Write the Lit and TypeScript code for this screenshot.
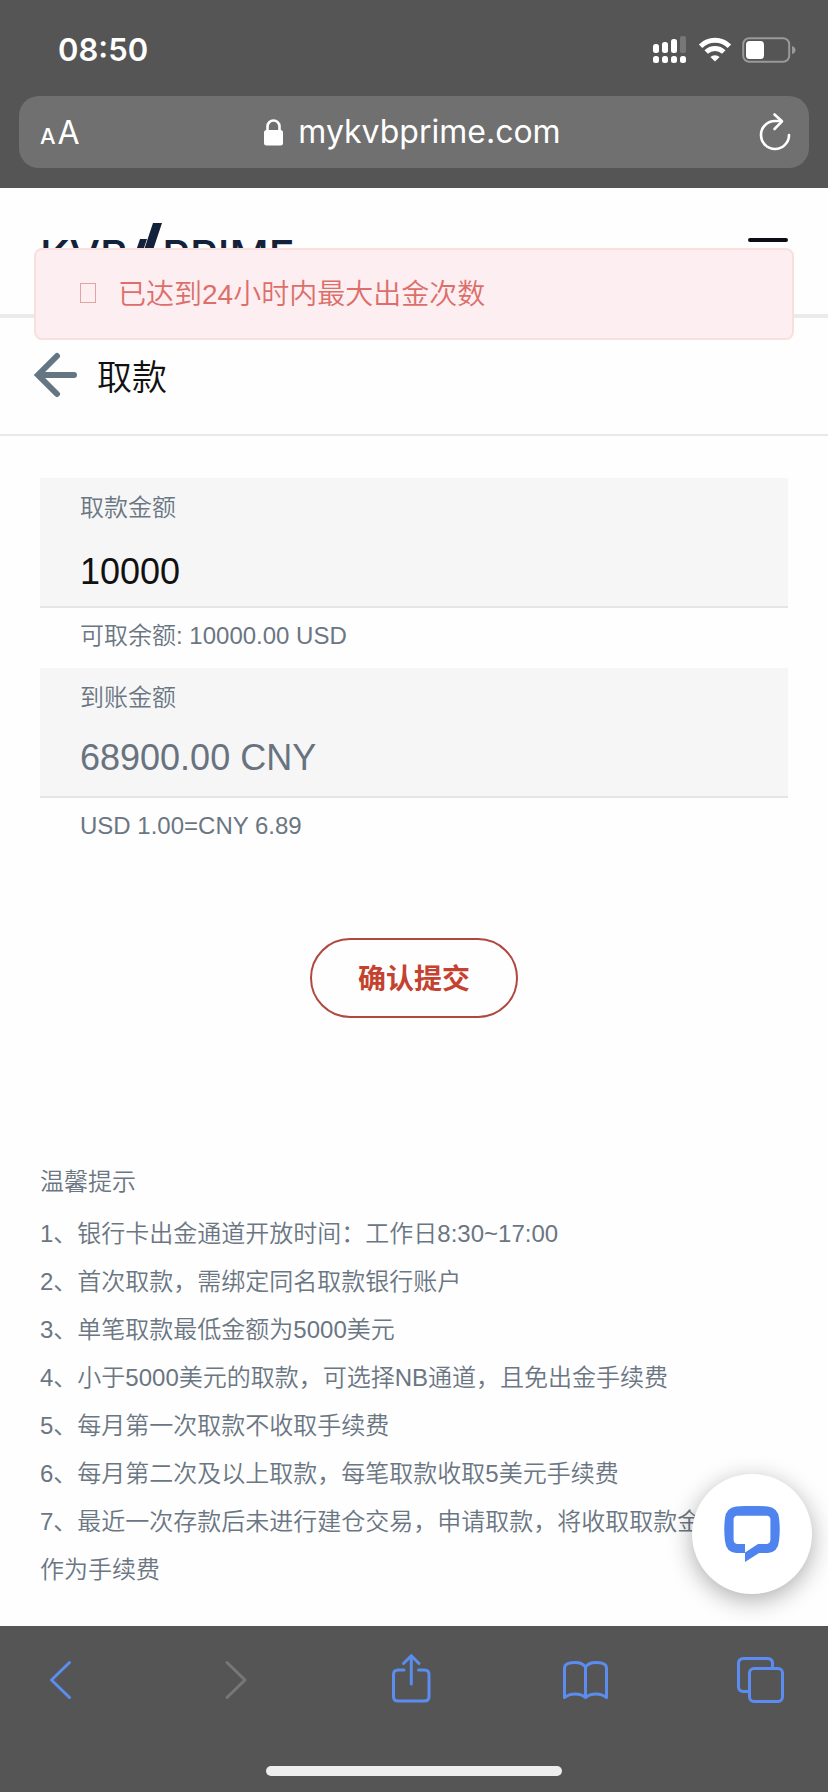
import { LitElement, html, css, svg } from "lit";
import { customElement, property, state } from "lit/decorators.js";

const TIPS = [
  "银行卡出金通道开放时间：工作日8:30~17:00",
  "首次取款，需绑定同名取款银行账户",
  "单笔取款最低金额为5000美元",
  "小于5000美元的取款，可选择NB通道，且免出金手续费",
  "每月第一次取款不收取手续费",
  "每月第二次及以上取款，每笔取款收取5美元手续费",
  "最近一次存款后未进行建仓交易，申请取款，将收取取款金额的5%作为手续费",
];

const RATE = 6.89;

/* Status bar and address field at the top of the browser */
@customElement("browser-header")
export class BrowserHeader extends LitElement {
  @property() time = "";
  @property() address = "";

  static styles = css`
    :host {
      display: block;
      background: #555;
      color: #fff;
      font-family: Inter, "Liberation Sans", sans-serif;
      font-weight: 400;
      padding: 0 19px 20px;
    }
    .status {
      display: flex;
      justify-content: space-between;
      align-items: center;
      height: 96px;
      padding: 4px 13px 0 39px;
      box-sizing: border-box;
    }
    .time {
      font-size: 31px;
      line-height: 40px;
      font-weight: 600;
    }
    .indicators {
      display: flex;
      align-items: center;
      gap: 10px;
    }
    svg {
      display: block;
    }
    .field {
      display: flex;
      align-items: center;
      justify-content: space-between;
      height: 72px;
      box-sizing: border-box;
      padding: 0 18px 0 21px;
      border-radius: 20px;
      background: #707070;
    }
    button {
      border: 0;
      padding: 0;
      background: none;
      color: inherit;
      font: inherit;
    }
    .reader {
      display: flex;
      align-items: baseline;
      gap: 2px;
      padding-top: 4px;
      font-size: 32px;
      line-height: 40px;
      width: 40px;
    }
    .small {
      font-size: 22px;
      font-weight: 500;
    }
    .site {
      display: flex;
      align-items: center;
      gap: 15px;
      margin-right: 14px;
      font-size: 32px;
      line-height: 40px;
    }
  `;

  render() {
    return html`
      <div class="status">
        <span class="time">${this.time}</span>
        <div class="indicators">
          <svg width="36" height="28" viewBox="0 0 36 28" fill="#fff" aria-hidden="true">
            <rect x="1" y="8" width="6" height="9" rx="2.5" />
            <rect x="10" y="6" width="6" height="11" rx="2.5" />
            <rect x="19" y="3" width="6" height="14" rx="2.5" />
            <rect x="28" y="0" width="6" height="17" rx="2" fill="#777" />
            <rect x="1" y="20" width="6" height="7" rx="2.5" />
            <rect x="10" y="20" width="6" height="7" rx="2.5" />
            <rect x="19" y="20" width="6" height="7" rx="2.5" />
            <rect x="28" y="20" width="6" height="7" rx="2.5" />
          </svg>
          <svg width="34" height="26" viewBox="0 0 34 26" aria-hidden="true">
            <g fill="none" stroke="#fff" stroke-width="5">
              <path d="M2.6 9.2 A20.5 20.5 0 0 1 31.4 9.2" />
              <path d="M8.2 15 A12.6 12.6 0 0 1 25.8 15" />
            </g>
            <path d="M17 24.6 L12.4 20 A6.6 6.6 0 0 1 21.6 20 Z" fill="#fff" />
          </svg>
          <svg width="54" height="26" viewBox="0 0 54 26" aria-hidden="true">
            <rect x="1.2" y="1.2" width="46" height="23.6" rx="6" fill="none" stroke="#999" stroke-width="2" />
            <rect x="4" y="4" width="18" height="18" rx="3.5" fill="#fff" />
            <path d="M50 9 Q53.5 10 53.5 13 Q53.5 16 50 17 Z" fill="#999" />
          </svg>
        </div>
      </div>
      <div class="field">
        <button class="reader" aria-label="AA"><span class="small">A</span><span>A</span></button>
        <div class="site">
          <svg width="19" height="27" viewBox="0 0 19 27" aria-hidden="true">
            <rect x="0" y="11" width="19" height="15.500" rx="2.500" fill="#fff" />
            <path d="M3.500 12.500 V7.500 a6 6 0 0 1 12 0 V12.500" fill="none" stroke="#fff" stroke-width="2.600" />
          </svg>
          <span>${this.address}</span>
        </div>
        <button aria-label="重新载入">
          <svg width="32" height="40" viewBox="0 0 32 40" fill="none" stroke="#fff" stroke-width="2.600" stroke-linecap="round" stroke-linejoin="round">
            <path d="M22 9 H16 A14 14 0 1 0 30 23" />
            <path d="M15.500 2.500 L23 9.300 L15.500 17" />
          </svg>
        </button>
      </div>
    `;
  }
}

/* Navigation buttons at the bottom of the browser */
@customElement("browser-toolbar")
export class BrowserToolbar extends LitElement {
  static styles = css`
    :host {
      display: block;
      background: #555;
      padding: 26px 0 16px;
    }
    .actions {
      display: flex;
      justify-content: space-between;
      padding: 0 44px 0 37px;
    }
    button {
      border: 0;
      padding: 0;
      background: none;
      width: 48px;
      height: 54px;
      color: #5b8df0;
    }
    button:disabled {
      color: #777;
    }
    svg {
      display: block;
      fill: none;
      stroke: currentColor;
      stroke-width: 3;
      stroke-linecap: round;
      stroke-linejoin: round;
    }
    .home {
      width: 296px;
      height: 10px;
      margin: 60px auto 0;
      border-radius: 5px;
      background: #eee;
    }
  `;

  private icon(shape: unknown) {
    return html`<svg width="48" height="54" viewBox="0 0 48 54">${shape}</svg>`;
  }

  render() {
    return html`
      <nav class="actions">
        <button aria-label="后退">${this.icon(svg`<path d="M32.500 10.500 L14.500 28 L32.500 45.500"/>`)}</button>
        <button aria-label="前进" disabled>${this.icon(svg`<path d="M15 10.500 L33 28 L15 45.500"/>`)}</button>
        <button aria-label="共享">
          ${this.icon(svg`<path d="M17 18 H11 Q6.500 18 6.500 22.500 V44.500 Q6.500 49 11 49 H37.500 Q42 49 42 44.500 V22.500 Q42 18 37.500 18 H31.500"/><path d="M24.300 32 V4 M16.500 11.500 L24.300 3.700 L32 11.500"/>`)}
        </button>
        <button aria-label="书签">
          ${this.icon(svg`<path d="M24.500 15 Q21.500 10.500 14 10.500 Q3.500 10.500 3.500 16 V45.500 Q8 42 14 42 Q20.500 42 24.500 45.500 Q28.500 42 35 42 Q41 42 45.500 45.500 V16 Q45.500 10.500 35 10.500 Q27.500 10.500 24.500 15 V45"/>`)}
        </button>
        <button aria-label="标签页">
          ${this.icon(svg`<rect x="13.500" y="16.500" width="33" height="33" rx="4.500"/><path d="M36.500 16 V11.500 Q36.500 6.500 31.500 6.500 H7.500 Q2.500 6.500 2.500 11.500 V34.500 Q2.500 39.500 7.500 39.500 H13"/>`)}
        </button>
      </nav>
      <div class="home"></div>
    `;
  }
}

@customElement("app-root")
export class AppRoot extends LitElement {
  @state() private amount = "10000";

  static styles = css`
    :host {
      display: flex;
      flex-direction: column;
      min-height: 100vh;
      background: #fefefe;
      color: #6b7683;
      font-family: "Liberation Sans", "Noto Sans CJK SC", sans-serif;
      font-size: 24px;
      line-height: 48px;
      font-weight: 350;
    }
    main {
      position: relative;
      flex: 1;
      overflow: hidden;
    }
    button {
      font: inherit;
      padding: 0;
      border: 0;
      background: none;
    }
    svg {
      display: block;
    }
    .masthead {
      display: flex;
      justify-content: space-between;
      align-items: center;
      height: 130px;
      box-sizing: border-box;
      padding: 0 40px;
      border-bottom: 4px solid #ebebeb;
    }
    .logo {
      display: flex;
      align-items: center;
      color: #14213a;
      font-family: Inter, "Liberation Sans", sans-serif;
      font-size: 43px;
      line-height: 48px;
      font-weight: 500;
      text-decoration: none;
    }
    .logo span {
      padding-top: 8px;
    }
    .toast {
      position: absolute;
      top: 60px;
      left: 34px;
      right: 34px;
      display: flex;
      align-items: center;
      gap: 22px;
      height: 92px;
      box-sizing: border-box;
      padding: 2px 44px 0;
      border: 2px solid #f9e0dd;
      border-radius: 8px;
      background: #fceef1;
      color: #dc6f6a;
      font-size: 28px;
      line-height: 40px;
    }
    .glyph {
      width: 16px;
      height: 20px;
      box-sizing: border-box;
      margin-bottom: 4px;
      border: 1px solid #e0a5a3;
    }
    .heading {
      display: flex;
      align-items: center;
      gap: 20px;
      padding: 34px 33px;
      border-bottom: 2px solid #e9e9e9;
    }
    h1 {
      margin: 0;
      padding-top: 4px;
      color: #111;
      font-size: 35px;
      line-height: 44px;
      font-weight: inherit;
    }
    form {
      padding: 42px 40px 0;
    }
    .box {
      display: flex;
      flex-direction: column;
      height: 130px;
      box-sizing: border-box;
      padding: 6px 40px 0;
      border-bottom: 2px solid #e4e5e6;
      background: #f6f6f6;
    }
    .value {
      width: 100%;
      box-sizing: border-box;
      margin: 12px 0 0;
      padding: 0;
      border: 0;
      outline: 0;
      background: none;
      color: #111;
      font-family: inherit;
      font-size: 36px;
      line-height: 56px;
      height: 56px;
    }
    .result {
      margin-top: 8px;
      color: #68737f;
    }
    .note {
      margin: 0;
      padding: 4px 40px 8px;
    }
    .submit {
      display: block;
      width: 208px;
      height: 80px;
      padding-top: 4px;
      margin: 80px auto 0;
      border: 2px solid #b04840;
      border-radius: 40px;
      color: #c4422f;
      font-size: 28px;
      line-height: 40px;
      font-weight: 700;
    }
    .tips {
      padding: 140px 40px 31px;
    }
    h2 {
      margin: 0 0 4px;
      font: inherit;
    }
    ol {
      margin: 0;
      padding: 0;
      list-style: none;
    }
    .chat {
      position: absolute;
      right: 16px;
      bottom: 32px;
      display: grid;
      place-items: center;
      width: 120px;
      height: 120px;
      border-radius: 50%;
      background: #fff;
      box-shadow: 0 6px 24px rgba(0, 0, 0, 0.32);
    }
  `;

  private onInput(event: Event) {
    this.amount = (event.target as HTMLInputElement).value;
  }

  render() {
    const received = (Number(this.amount) * RATE).toFixed(2);
    return html`
      <browser-header time="08:50" address="mykvbprime.com"></browser-header>
      <main>
        <header class="masthead">
          <a class="logo" href="#" aria-label="KVB PRIME">
            <span>KVB</span>
            <svg width="34" height="56" viewBox="2 0 34 56" fill="#14213a" aria-hidden="true">
              <path d="M27 0 H36 L20 48 H11 Z" />
              <path d="M14 16 H21 L10 48 H3 Z" />
            </svg>
            <span>PRIME</span>
          </a>
          <button aria-label="菜单">
            <svg width="40" height="32" viewBox="0 0 40 32" stroke="#0c0c14" stroke-width="4" stroke-linecap="round">
              <path d="M2 5 H38 M2 17 H38 M2 29 H38" />
            </svg>
          </button>
        </header>
        <div class="heading">
          <button aria-label="返回">
            <svg width="44" height="48" viewBox="0 0 44 48" fill="none" stroke="#647583" stroke-width="6" stroke-linecap="round" stroke-linejoin="miter">
              <path d="M24 4 L5 23 L24 42 M6 23 H41" />
            </svg>
          </button>
          <h1>取款</h1>
        </div>
        <form @submit=${(e: Event) => e.preventDefault()}>
          <div class="box">
            <label for="amount">取款金额</label>
            <input class="value" id="amount" inputmode="decimal" .value=${this.amount} @input=${this.onInput} />
          </div>
          <p class="note">可取余额: 10000.00 USD</p>
          <div class="box">
            <label for="received">到账金额</label>
            <output class="value result" id="received" for="amount">${received} CNY</output>
          </div>
          <p class="note">${`USD 1.00=CNY ${RATE}`}</p>
          <button class="submit" type="submit">确认提交</button>
        </form>
        <section class="tips">
          <h2>温馨提示</h2>
          <ol>
            ${TIPS.map((tip, i) => html`<li>${`${i + 1}、${tip}`}</li>`)}
          </ol>
        </section>
        <div class="toast" role="alert"><span class="glyph"></span><span>已达到24小时内最大出金次数</span></div>
        <button class="chat" aria-label="在线客服">
          <svg width="56" height="56" viewBox="0 0 56 56" aria-hidden="true">
            <path fill="#4f83ee" d="M12 .5 Q28 -.8 44 .5 Q54 2 55 12 Q56.500 24 55 35 Q54 46 44 47 H35 L21 56 V47 H12 Q2 46 1 35 Q-.5 24 1 12 Q2 2 12 .5 Z" />
            <path fill="#fff" d="M13 9.700 H43 Q46 10 46.400 13 V34 Q46 37.500 43 38 H34 L21 46.500 V38 H13 Q10 37.500 9.600 34 V13 Q10 10 13 9.700 Z" />
          </svg>
        </button>
      </main>
      <browser-toolbar></browser-toolbar>
    `;
  }
}
